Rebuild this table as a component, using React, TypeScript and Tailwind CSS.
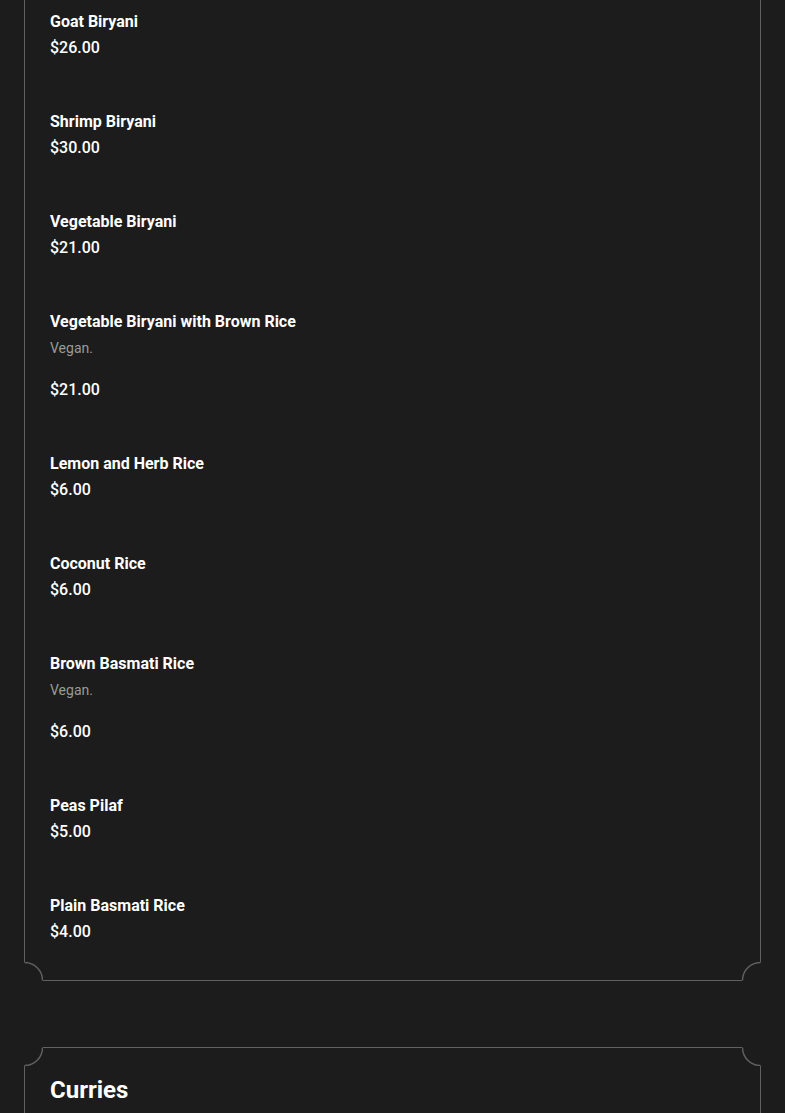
const items = [
  { name: "Goat Biryani", price: "$26.00" },
  { name: "Shrimp Biryani", price: "$30.00" },
  { name: "Vegetable Biryani", price: "$21.00" },
  { name: "Vegetable Biryani with Brown Rice", desc: "Vegan.", price: "$21.00" },
  { name: "Lemon and Herb Rice", price: "$6.00" },
  { name: "Coconut Rice", price: "$6.00" },
  { name: "Brown Basmati Rice", desc: "Vegan.", price: "$6.00" },
  { name: "Peas Pilaf", price: "$5.00" },
  { name: "Plain Basmati Rice", price: "$4.00" },
]

// scalloped corner: covers the square corner and draws a quarter arc
function Corner({ pos }: { pos: "tl" | "tr" | "bl" | "br" }) {
  const place = {
    tl: "-left-px -top-px",
    tr: "-right-px -top-px",
    bl: "-left-px -bottom-px",
    br: "-right-px -bottom-px",
  }[pos]
  const d = {
    tl: "M0.5 18.5 A18 18 0 0 0 18.5 0.5",
    tr: "M0.5 0.5 A18 18 0 0 0 18.5 18.5",
    bl: "M0.5 0.5 A18 18 0 0 1 18.5 18.5",
    br: "M0.5 18.5 A18 18 0 0 1 18.5 0.5",
  }[pos]
  return (
    <svg className={`absolute ${place} h-[19px] w-[19px]`} viewBox="0 0 19 19">
      <rect width="19" height="19" fill="#1c1c1c" />
      <path d={d} fill="none" stroke="#616161" strokeWidth="1.4" />
    </svg>
  )
}

function MenuItem({ name, desc, price }: { name: string; desc?: string; price: string }) {
  return (
    <div className="pb-[50px]">
      <div className="text-[16px] font-bold leading-6 text-white">{name}</div>
      {desc && <div className="mt-1 text-[14px] leading-5 text-[#9a9a9a]">{desc}</div>}
      <div className={`${desc ? "mt-5" : "mt-[2px]"} text-[16px] font-medium leading-6 text-white`}>{price}</div>
    </div>
  )
}

export default function App() {
  return (
    <div className="min-h-[1113px] overflow-hidden bg-[#1c1c1c] px-6 font-['Roboto',sans-serif]">
      <div className="relative border border-t-0 border-[#616161] px-[25px] pt-[10px] pb-[36px] [&>div:last-of-type]:pb-0">
        {items.map((it) => (
          <MenuItem key={it.name} {...it} />
        ))}
        <Corner pos="bl" />
        <Corner pos="br" />
      </div>

      <div className="relative mt-[66px] border border-[#616161] px-[25px] pt-[26px] pb-10">
        <h2 className="text-[24px] font-bold leading-8 text-white">Curries</h2>
        <Corner pos="tl" />
        <Corner pos="tr" />
      </div>
    </div>
  )
}
